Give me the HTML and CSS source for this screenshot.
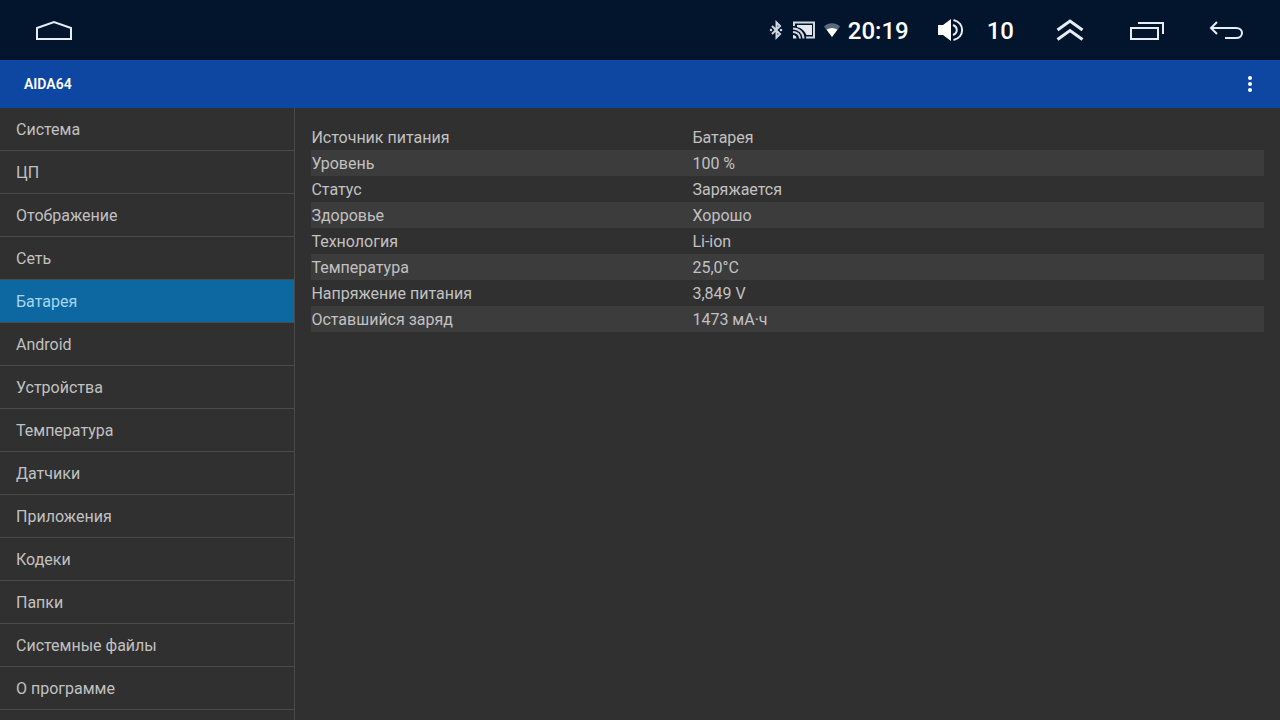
FILE: index.html
```html
<!DOCTYPE html>
<html lang="ru">
<head>
<meta charset="utf-8">
<meta name="viewport" content="width=device-width, initial-scale=1">
<title>AIDA64</title>
<link rel="stylesheet" href="styles.css">
</head>
<body>
<header class="system-bar">
  <button class="nav-button" type="button" aria-label="Домой">
    <svg width="40" height="24" viewBox="0 0 40 24"><path d="M3 21V10L20 4L37 10V21Z"/></svg>
  </button>
  <div class="status">
    <div class="status-icons">
      <svg class="bluetooth" width="14" height="20" viewBox="0 0 14 20"><path d="M3 6L11 14L7.500 17.500V2.500L11 6L3 14"/><path class="solid" d="M0.500 10L2 8.500L3.500 10L2 11.500ZM10.500 10L12 8.500L13.500 10L12 11.500Z"/></svg>
      <svg class="cast" width="24" height="20" viewBox="0 0 24 20"><path d="M2 6V2.500H22V17.500H14"/><path class="solid" d="M5 5H20V15H14.500C12.500 10.500 9.500 8 5 7Z"/><path class="waves" d="M1 8.500C7 8.500 11.500 13 11.500 18.500M1 12C4.800 12 8 14.800 8 18.500"/><path class="solid" d="M1 15C3 15 4.500 16.500 4.500 18.500H1Z"/></svg>
      <svg class="wifi" width="18" height="20" viewBox="0 0 18 20"><path class="faint" d="M1 6.500C5.500 2.200 12.500 2.200 17 6.500L9 17Z"/><path class="solid" d="M3.500 9.500C7 7.500 11 7.500 14.500 9.500L9 17Z"/></svg>
    </div>
    <time class="clock">20:19</time>
    <div class="volume">
      <svg width="28" height="24" viewBox="0 0 28 24"><path class="solid" d="M1 7H6L14 1V23L6 17H1Z"/><path class="waves" d="M16 7C21 9 21 15 16 17M16.500 2C28 5 28 19 16.500 22"/></svg>
      <span class="level">10</span>
    </div>
  </div>
  <button class="nav-button" type="button" aria-label="Развернуть">
    <svg class="chevrons" width="32" height="26" viewBox="0 0 32 26"><path d="M3.500 13L16 4L28.500 13M3.500 22.500L16 13.500L28.500 22.500"/></svg>
  </button>
  <button class="nav-button" type="button" aria-label="Недавние">
    <svg width="38" height="20" viewBox="0 0 38 20"><path d="M2 8H29V19H2ZM9 3H34V14"/></svg>
  </button>
  <button class="nav-button" type="button" aria-label="Назад">
    <svg width="36" height="20" viewBox="0 0 36 20"><path d="M9 2L3 8L9 14M3 8H28C36 8 36 18 28 18H17"/></svg>
  </button>
</header>
<div class="app-bar">
  <h1>AIDA64</h1>
  <button class="menu-button" type="button" aria-label="Меню">
    <svg width="6" height="18" viewBox="0 0 6 18"><circle cx="3" cy="3" r="2"/><circle cx="3" cy="9" r="2"/><circle cx="3" cy="15" r="2"/></svg>
  </button>
</div>
<div class="content">
  <nav class="sidebar">
    <a href="#">Система</a>
    <a href="#">ЦП</a>
    <a href="#">Отображение</a>
    <a href="#">Сеть</a>
    <a href="#" class="active" aria-current="page">Батарея</a>
    <a href="#">Android</a>
    <a href="#">Устройства</a>
    <a href="#">Температура</a>
    <a href="#">Датчики</a>
    <a href="#">Приложения</a>
    <a href="#">Кодеки</a>
    <a href="#">Папки</a>
    <a href="#">Системные файлы</a>
    <a href="#">О программе</a>
  </nav>
  <main class="details">
    <table>
      <tbody>
        <tr><th scope="row">Источник питания</th><td>Батарея</td></tr>
        <tr><th scope="row">Уровень</th><td>100 %</td></tr>
        <tr><th scope="row">Статус</th><td>Заряжается</td></tr>
        <tr><th scope="row">Здоровье</th><td>Хорошо</td></tr>
        <tr><th scope="row">Технология</th><td>Li-ion</td></tr>
        <tr><th scope="row">Температура</th><td>25,0°C</td></tr>
        <tr><th scope="row">Напряжение питания</th><td>3,849 V</td></tr>
        <tr><th scope="row">Оставшийся заряд</th><td>1473 мА·ч</td></tr>
      </tbody>
    </table>
  </main>
</div>
</body>
</html>
```
FILE: styles.css
```css
* {
  box-sizing: border-box;
}

body {
  display: flex;
  flex-direction: column;
  height: 100vh;
  margin: 0;
  overflow: hidden;
  background: #303030;
  color: #c1c1c1;
  font: 16px/24px Roboto, sans-serif;
}

button {
  display: flex;
  align-items: center;
  justify-content: center;
  padding: 0;
  border: 0;
  background: none;
}

svg {
  display: block;
  flex: none;
  fill: none;
  stroke: #e8edf5;
  stroke-width: 2;
}

.system-bar {
  display: flex;
  flex: none;
  align-items: center;
  height: 60px;
  padding: 0 15px;
  background: #02152d;
  color: #fff;
}

.nav-button {
  width: 78px;
  height: 60px;
}

.status {
  display: flex;
  align-items: center;
  gap: 28px;
  margin-left: auto;
  padding-right: 17px;
  font-size: 24px;
  font-weight: 500;
}

.status-icons {
  display: flex;
  gap: 9px;
  margin-right: -21px;
}

.clock,
.level {
  padding-top: 2px;
}

.status .solid {
  fill: #fff;
  stroke: none;
}

.bluetooth,
.cast {
  opacity: 0.9;
}

.wifi {
  margin-left: -2px;
}

.wifi .faint {
  fill: #5b687c;
  stroke: none;
}

.volume {
  display: flex;
  align-items: center;
  gap: 22px;
}

.chevrons {
  stroke-width: 3;
}

.app-bar {
  display: flex;
  flex: none;
  align-items: center;
  justify-content: space-between;
  height: 48px;
  padding: 0 6px 0 24px;
  background: #0d47a1;
  color: #fff;
}

.app-bar h1 {
  margin: 0;
  font-size: 14px;
  font-weight: 600;
}

.menu-button {
  width: 48px;
  height: 48px;
}

.menu-button svg {
  fill: #fff;
  stroke: none;
}

.content {
  display: flex;
  flex: 1;
  min-height: 0;
}

.sidebar {
  flex: none;
  width: calc(23% + 1px);
  border-right: 1px solid #4a4a4a;
}

.sidebar a {
  display: block;
  padding: 10px 16px 8px;
  border-bottom: 1px solid #4a4a4a;
  color: inherit;
  text-decoration: none;
}

.sidebar .active {
  background: #0d68a1;
  color: #a8d4ee;
}

.details {
  flex: 1;
  padding: 16px;
}

.details table {
  width: 100%;
  border-collapse: collapse;
  table-layout: fixed;
}

.details th,
.details td {
  padding: 2px 0 0;
  font-weight: 400;
  text-align: left;
}

.details th {
  width: 40%;
}

.details tr:nth-child(even) {
  background: #3c3c3c;
}
```
